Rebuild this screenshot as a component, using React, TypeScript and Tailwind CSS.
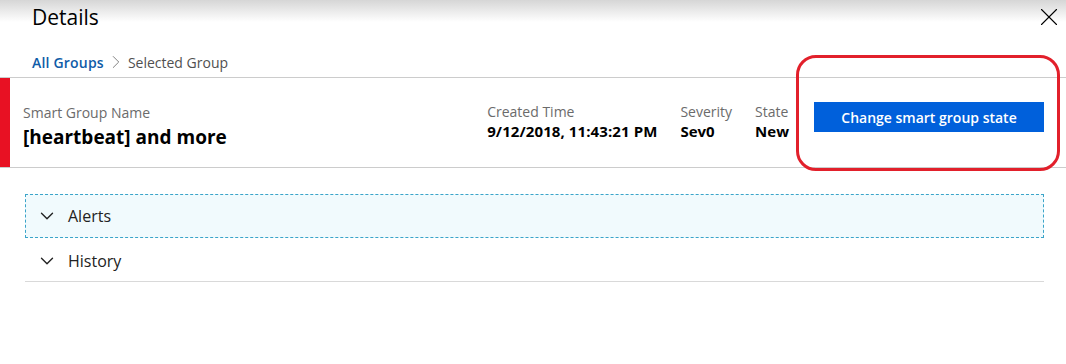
import { ChevronDown, ChevronRight, X } from 'lucide-react';

const sections = ['Alerts', 'History'];

export default function App() {
  return (
    <div className="relative w-[1066px] h-[364px] overflow-hidden bg-[linear-gradient(to_bottom,#d6d6d6_0px,#ffffff_22px)] font-['Open_Sans',sans-serif] text-black">
      {/* Header */}
      <div className="flex justify-between items-start pl-[32px] pr-[2px] pt-[3px] h-[47px]">
        <h1 className="text-[21px] leading-[28px] font-normal">Details</h1>
        <X className="-mt-[1px] w-[30px] h-[30px]" strokeWidth={0.9} />
      </div>

      {/* Breadcrumb */}
      <div className="flex items-center pl-[32px] h-[30px] text-[14px]">
        <span className="font-semibold text-[#0f5ca8] tracking-[0.2px]">All Groups</span>
        <ChevronRight className="mx-[1px] w-[22px] h-[22px] text-[#777]" strokeWidth={1} />
        <span className="text-[#505050]">Selected Group</span>
      </div>

      {/* Summary */}
      <div className="flex border-t border-b border-[#cccccc] h-[91px]">
        <div className="bg-[#e81123] w-[10px]" />
        <div className="flex flex-1 items-center pl-[13px] pr-[22px]">
          <div className="flex-1 pt-[8px]">
            <div className="text-[14px] leading-[18px] text-[#6b6b6b]">Smart Group Name</div>
            <div className="mt-[3px] text-[19px] leading-[24px] font-bold">[heartbeat] and more</div>
          </div>
          <div className="flex gap-[23px] mr-[25px] -mt-[1px]">
            <div>
              <div className="text-[14px] leading-[18px] text-[#6b6b6b]">Created Time</div>
              <div className="text-[15px] leading-[20px] font-bold tracking-[0.1px]">9/12/2018, 11:43:21 PM</div>
            </div>
            <div>
              <div className="text-[14px] leading-[18px] text-[#6b6b6b]">Severity</div>
              <div className="text-[15px] leading-[20px] font-bold">Sev0</div>
            </div>
            <div>
              <div className="text-[14px] leading-[18px] text-[#6b6b6b]">State</div>
              <div className="text-[15px] leading-[20px] font-bold">New</div>
            </div>
          </div>
          <button className="-mt-[11px] w-[230px] h-[30px] bg-[#0060db] text-white text-[14px] font-semibold">
            Change smart group state
          </button>
        </div>
      </div>

      {/* Sections */}
      <div className="mx-[25px] mt-[26px] w-[1019px]">
        {sections.map((s, i) => (
          <div
            key={s}
            className={
              i === 0
                ? 'flex items-center h-[44px] border border-dashed border-[#3ba4c9] bg-[#f1fafd]'
                : 'flex items-center h-[44px] border-b border-[#d9d9d9] pt-[2px] pl-[1px]'
            }
          >
            <ChevronDown className="ml-[10px] w-[22px] h-[22px] text-[#222]" strokeWidth={1.5} />
            <span className="ml-[10px] text-[16px] text-[#222]">{s}</span>
          </div>
        ))}
      </div>

      {/* Annotation */}
      <div className="absolute left-[796px] top-[55px] w-[264px] h-[116px] border-[3px] border-[#e2202b] rounded-[20px]" />
    </div>
  );
}
